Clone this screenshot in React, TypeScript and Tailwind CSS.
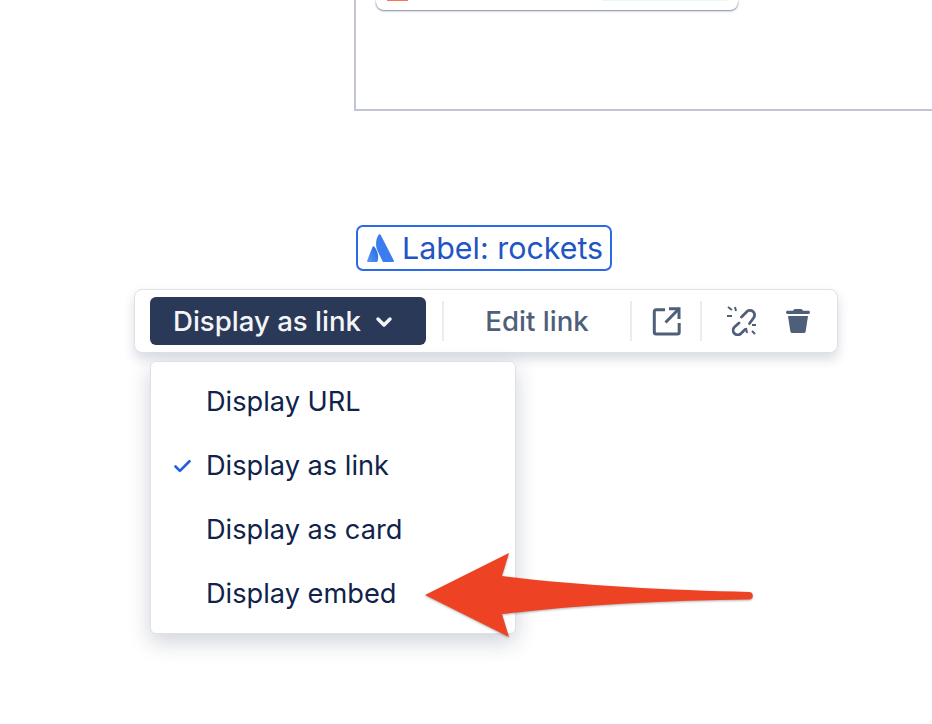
import { Check, ChevronDown } from "lucide-react";

const options = [
  { label: "Display URL", selected: false },
  { label: "Display as link", selected: true },
  { label: "Display as card", selected: false },
  { label: "Display embed", selected: false },
];

function AtlassianLogo() {
  return (
    <svg width="27" height="28" viewBox="0 0 27 28" className="shrink-0">
      <defs>
        <linearGradient id="atl" x1="1" y1="0" x2="0" y2="1">
          <stop offset="0" stopColor="#2463d8" />
          <stop offset="1" stopColor="#5b9bf8" />
        </linearGradient>
      </defs>
      <path d="M7.300 12.700c-.5-.7-1.400-.6-1.800.2L.2 26.500c-.3.700.2 1.500 1 1.500h8.300c.4 0 .8-.2 1-.6 1.500-3.800.6-10.400-3.200-14.700z" fill="url(#atl)" />
      <path d="M11.500.8C8.500 6 8.300 12 10.800 17.500l4.900 9.900c.2.400.6.600 1 .6h9.100c.8 0 1.400-.8 1-1.500L13.600.8c-.4-.9-1.600-.9-2.100 0z" fill="#3b7df0" />
    </svg>
  );
}

function ExternalLinkIcon() {
  return (
    <svg width="30" height="30" viewBox="0 0 30 30" fill="none" stroke="#505f79" strokeWidth="3">
      <path d="M13 3.700H4a1.700 1.700 0 0 0-1.700 1.700v21A1.700 1.700 0 0 0 4 28h21.500a1.700 1.700 0 0 0 1.700-1.700V17" />
      <path d="M17 2.700h10V13" />
      <path d="M27 2.700 13.500 16.500" />
    </svg>
  );
}

function UnlinkIcon() {
  return (
    <svg width="30" height="30" viewBox="0 0 30 30" fill="none" stroke="#505f79" strokeWidth="2.800" strokeLinecap="round">
      <path d="M14.500 11 19.500 6a4.500 4.500 0 0 1 7 6l-4 5.500" />
      <path d="M12 17 7.500 21a4.500 4.500 0 0 0 6.500 6.500l4-4" />
      <path strokeWidth="2" strokeLinecap="butt" d="M1 1l4 3M8 1l1 4M0 10h5M25 19h4M19 22l1 5M25 25l3 3" />
    </svg>
  );
}

function TrashIcon() {
  return (
    <svg width="24" height="24" viewBox="0 0 24 24" fill="#505f79">
      <path d="M0 3.300C0 2.400.7 1.700 1.600 1.700H7C7.500.6 8.400 0 9.400 0h5.200c1 0 1.900.6 2.400 1.700h5.400c.9 0 1.600.7 1.600 1.600S23.300 5 22.400 5H1.600C.7 5 0 4.200 0 3.300z" />
      <path d="M2 7h20l-2.300 15.200c-.2 1.100-1 1.800-2.100 1.800H6.400c-1.100 0-1.900-.7-2.100-1.800L2 7z" />
    </svg>
  );
}

function Divider() {
  return <div className="w-[2px] h-10 bg-[#ebecf0]" />;
}

export default function App() {
  return (
    <div
      className="relative w-[932px] h-[724px] overflow-hidden bg-white"
      style={{ fontFamily: "Inter, 'Liberation Sans', sans-serif" }}
    >
      {/* cut-off preview frame */}
      <div className="ml-[354px] h-[111px] border-l-2 border-b-2 border-[#c1c4d2]">
        <div className="ml-[20px] w-[362px] h-[10px] flex items-end gap-[194px] px-[11px] rounded-b-[8px] bg-white shadow-[0_1px_2px_rgba(80,90,130,0.7),0_0_1px_rgba(9,30,66,0.3)]">
          <div className="w-[21px] h-[1px] mb-[9px] bg-[#f9744f]" />
          <div className="w-[125px] h-[1px] mb-[9px] bg-[#e3fcef]" />
        </div>
      </div>

      {/* inline smart link */}
      <div className="mt-[114px] ml-[356px] w-[256px] h-[46px] flex items-center gap-[8px] pl-[9px] rounded-[7px] border-2 border-[#2a6ae9] text-[#1f55c4] text-[30.400px] leading-none whitespace-nowrap">
        <AtlassianLogo />
        <span>Label: rockets</span>
      </div>

      {/* floating toolbar */}
      <div className="mt-[18px] ml-[134px] w-[704px] h-[64px] flex items-center pl-[15px] rounded-[8px] border border-[#dfe1e6] bg-white shadow-[0_6px_12px_rgba(9,30,66,0.16)]">
        <button className="w-[276px] h-[48px] flex items-center gap-[11px] pl-[23px] pt-[1px] rounded-[6px] bg-[#2a3958] text-[#f4f5f7] text-[27.600px] font-medium">
          Display as link
          <ChevronDown size={24} strokeWidth={3.5} />
        </button>
        <div className="ml-[16px]"><Divider /></div>
        <span className="w-[186px] pt-[1px] text-center text-[27.600px] font-medium text-[#505f79]">Edit link</span>
        <Divider />
        <div className="ml-[20px] mr-[18px] flex"><ExternalLinkIcon /></div>
        <Divider />
        <div className="ml-[25px] mr-[29px] flex"><UnlinkIcon /></div>
        <div className="flex"><TrashIcon /></div>
      </div>

      {/* display menu */}
      <div className="mt-[8px] ml-[150px] w-[366px] h-[273px] flex flex-col py-[8px] rounded-[6px] border border-[#dfe1e6] bg-white shadow-[0_8px_22px_rgba(9,30,66,0.2)]">
        {options.map((option) => (
          <div key={option.label} className="h-[64px] shrink-0 flex items-center text-[27.200px] text-[#10234a]">
            <div className="w-[55px] flex justify-end pr-[13px] text-[#2160d8]">
              {option.selected && <Check size={21} strokeWidth={3} />}
            </div>
            {option.label}
          </div>
        ))}
      </div>

      {/* annotation arrow */}
      <svg className="absolute left-0 top-0 pointer-events-none drop-shadow-[0_1px_1px_rgba(0,0,0,0.3)]" width="932" height="724" viewBox="0 0 932 724">
        <path
          d="M425 595 509 553 502 576C580 586 670 590 749 592a3.500 3.500 0 0 1 0 7.500C670 600 580 605 502 614L509 637Z"
          fill="#ee4225"
        />
      </svg>
    </div>
  );
}
